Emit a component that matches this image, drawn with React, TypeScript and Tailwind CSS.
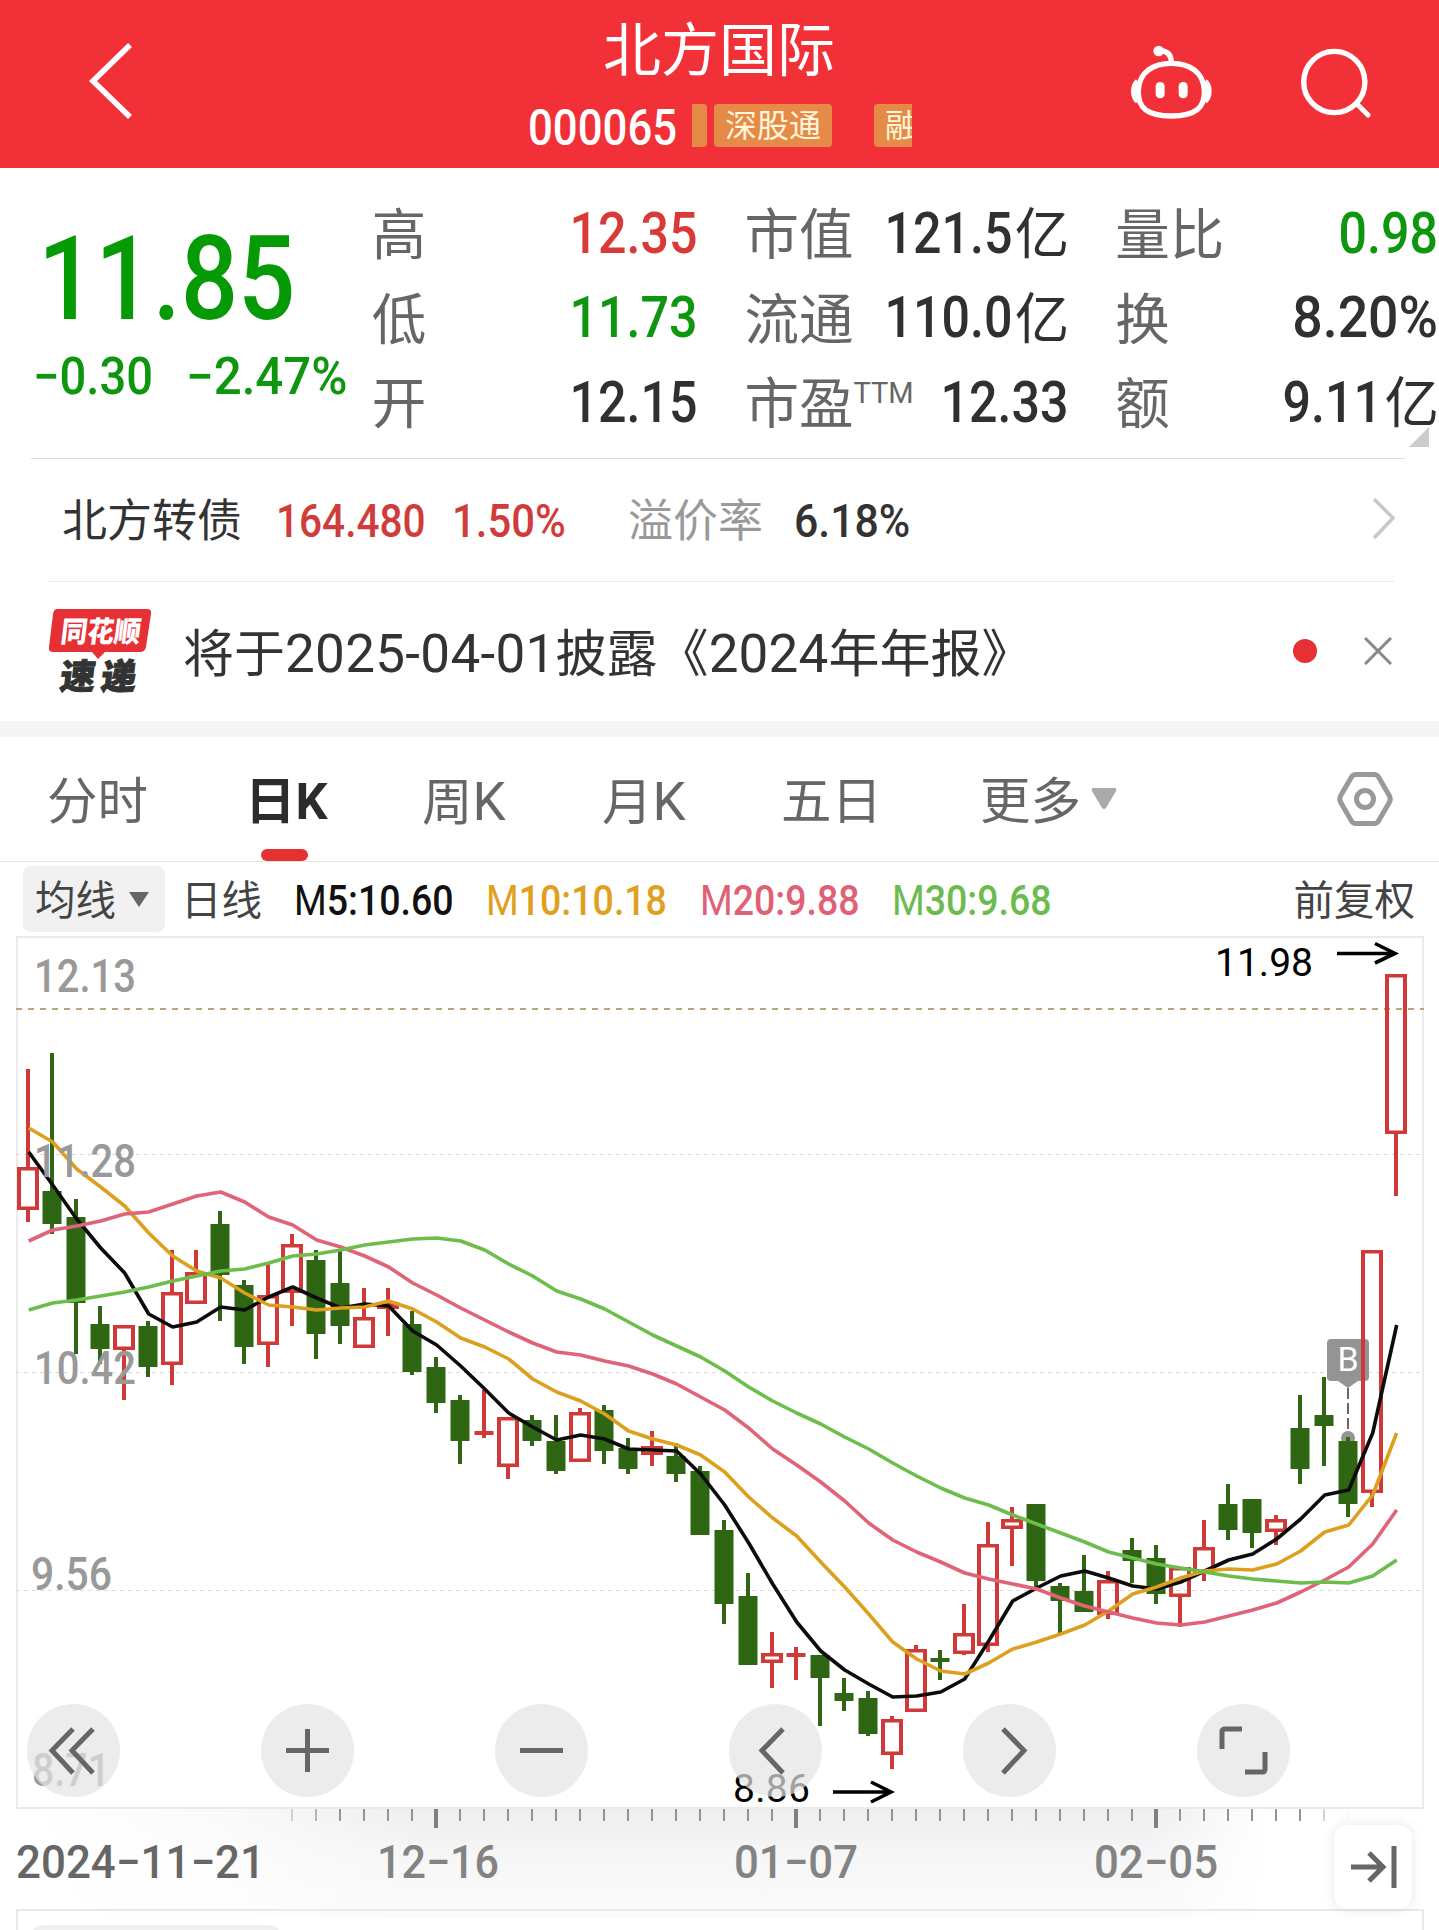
import type { ReactNode } from 'react'
import { clsx } from 'clsx'

type Candle = [up: boolean, high: number, top: number, bottom: number, low: number]

interface Stat {
  label: string
  sup?: string
  value: string
  unit?: string
  color?: string
  scale?: string
}

const UP = '#cf3a38'
const DOWN = '#2f6614'

// 每根K线的间距与起点
const STEP = 24
const START = 28

const STATS: Stat[][] = [
  [
    { label: '高', value: '12.35', color: 'text-[#d93a38]' },
    { label: '低', value: '11.73', color: 'text-[#0f960f]' },
    { label: '开', value: '12.15' },
  ],
  [
    { label: '市值', value: '121.5', unit: '亿' },
    { label: '流通', value: '110.0', unit: '亿' },
    { label: '市盈', sup: 'TTM', value: '12.33' },
  ],
  [
    { label: '量比', value: '0.98', color: 'text-[#0f960f]' },
    { label: '换', value: '8.20%', scale: 'scale-x-[0.94]' },
    { label: '额', value: '9.11', unit: '亿' },
  ],
]

const CANDLES: Candle[] = [
  [true, 1069, 1167, 1210, 1222],
  [false, 1053, 1191, 1224, 1234],
  [false, 1199, 1217, 1303, 1354],
  [false, 1306, 1324, 1349, 1364],
  [true, 1325, 1325, 1350, 1400],
  [false, 1321, 1326, 1367, 1377],
  [true, 1250, 1292, 1365, 1385],
  [true, 1250, 1272, 1304, 1304],
  [false, 1211, 1224, 1275, 1321],
  [false, 1280, 1285, 1347, 1364],
  [true, 1264, 1295, 1345, 1367],
  [true, 1234, 1244, 1293, 1326],
  [false, 1250, 1260, 1334, 1359],
  [false, 1250, 1283, 1326, 1344],
  [true, 1288, 1317, 1348, 1348],
  [true, 1288, 1302, 1309, 1336],
  [false, 1311, 1324, 1372, 1375],
  [false, 1357, 1367, 1403, 1413],
  [false, 1395, 1400, 1441, 1464],
  [true, 1390, 1431, 1435, 1438],
  [true, 1417, 1417, 1467, 1479],
  [false, 1415, 1420, 1441, 1446],
  [false, 1415, 1441, 1471, 1474],
  [true, 1408, 1412, 1462, 1462],
  [false, 1405, 1410, 1451, 1464],
  [false, 1438, 1448, 1469, 1474],
  [true, 1431, 1446, 1455, 1466],
  [false, 1443, 1456, 1474, 1482],
  [false, 1466, 1471, 1535, 1535],
  [false, 1520, 1530, 1604, 1624],
  [false, 1573, 1596, 1665, 1665],
  [true, 1632, 1653, 1663, 1688],
  [true, 1647, 1653, 1657, 1680],
  [false, 1655, 1655, 1678, 1726],
  [false, 1678, 1693, 1701, 1711],
  [false, 1691, 1698, 1734, 1736],
  [true, 1716, 1719, 1755, 1769],
  [true, 1645, 1649, 1712, 1712],
  [false, 1650, 1658, 1662, 1680],
  [true, 1604, 1633, 1654, 1655],
  [true, 1522, 1544, 1646, 1652],
  [true, 1507, 1519, 1529, 1566],
  [false, 1504, 1504, 1581, 1587],
  [false, 1583, 1586, 1601, 1633],
  [false, 1555, 1591, 1612, 1612],
  [true, 1571, 1580, 1615, 1619],
  [false, 1538, 1550, 1561, 1583],
  [false, 1545, 1558, 1594, 1604],
  [true, 1567, 1567, 1597, 1627],
  [true, 1520, 1547, 1573, 1581],
  [false, 1484, 1504, 1530, 1540],
  [false, 1499, 1499, 1533, 1548],
  [true, 1515, 1519, 1532, 1545],
  [false, 1395, 1428, 1469, 1484],
  [false, 1377, 1415, 1426, 1466],
  [false, 1437, 1441, 1504, 1517],
  [true, 1250, 1250, 1493, 1507],
  [true, 974, 974, 1134, 1196],
]

const MA5 = [
  1152, 1185, 1219, 1248, 1273, 1314, 1327, 1322, 1307, 1310, 1297, 1287, 1298, 1308, 1304, 1306, 1331, 1345, 1366, 1389,
  1413, 1427, 1440, 1435, 1439, 1449, 1450, 1451, 1474, 1505, 1543, 1584, 1622, 1651, 1670, 1684, 1697, 1696, 1692, 1679,
  1641, 1601, 1588, 1576, 1571, 1578, 1586, 1589, 1582, 1571, 1560, 1554, 1539, 1519, 1495, 1490, 1433, 1325,
]
const MA10 = [
  1128, 1142, 1169, 1187, 1206, 1233, 1256, 1271, 1278, 1293, 1305, 1307, 1310, 1308, 1307, 1301, 1309, 1322, 1338, 1347,
  1359, 1379, 1392, 1401, 1414, 1431, 1439, 1445, 1455, 1472, 1497, 1518, 1536, 1562, 1587, 1614, 1642, 1659, 1671, 1674,
  1663, 1649, 1642, 1634, 1625, 1611, 1594, 1587, 1578, 1571, 1569, 1570, 1564, 1551, 1532, 1525, 1495, 1433,
]
const MA20 = [
  1241, 1230, 1226, 1221, 1214, 1212, 1204, 1196, 1192, 1202, 1217, 1225, 1240, 1247, 1256, 1267, 1283, 1295, 1308, 1320,
  1332, 1343, 1352, 1355, 1361, 1366, 1374, 1384, 1397, 1410, 1428, 1449, 1465, 1482, 1501, 1523, 1540, 1552, 1562, 1573,
  1579, 1584, 1589, 1598, 1606, 1612, 1618, 1623, 1625, 1622, 1616, 1610, 1603, 1592, 1580, 1567, 1544, 1510,
]
const MA30 = [
  1310, 1303, 1300, 1296, 1292, 1287, 1281, 1276, 1271, 1269, 1263, 1256, 1254, 1250, 1245, 1242, 1239, 1238, 1241, 1250,
  1264, 1276, 1291, 1299, 1309, 1322, 1335, 1346, 1357, 1371, 1387, 1401, 1413, 1424, 1437, 1449, 1463, 1476, 1488, 1498,
  1505, 1515, 1524, 1533, 1542, 1552, 1558, 1564, 1568, 1572, 1576, 1579, 1581, 1583, 1582, 1583, 1576, 1560,
]

const LINES = [
  { data: MA5, color: '#0c0c0c' },
  { data: MA10, color: '#dda01e' },
  { data: MA20, color: '#e06377' },
  { data: MA30, color: '#6cbd4c' },
]

// 左侧价格刻度
const PRICES = [
  { text: '12.13', x: 36, y: 992, width: 98 },
  { text: '11.28', x: 36, y: 1177, width: 98 },
  { text: '10.42', x: 36, y: 1384, width: 98 },
  { text: '9.56', x: 33, y: 1590, width: 77 },
  { text: '8.71', x: 34, y: 1786, width: 74 },
]

const MAJOR_TICKS = [17, 32, 47]

function Num({ children, className }: { children: ReactNode; className?: string }) {
  return <span className={clsx('inline-block font-medium whitespace-nowrap', className)}>{children}</span>
}

function Header() {
  return (
    <header className="flex h-[168px] bg-[#f23038] text-white">
      <div className="flex w-[520px] pt-[40px] pl-[86px]">
        <svg width="50" height="82" viewBox="0 0 50 82" fill="none" stroke="#fff" strokeWidth="5.6">
          <path d="M44 5 L7 41 L44 77" />
        </svg>
      </div>
      <div className="flex w-[400px] flex-col">
        <h1 className="mt-[21px] ml-[83px] text-[58px] leading-[60px] font-normal">北方国际</h1>
        <div className="mt-[23px] flex h-[43px] items-center">
          <Num className="w-[172px] origin-left translate-x-[8px] translate-y-[2px] scale-x-[0.875] text-[50px] leading-none">
            000065
          </Num>
          <div className="flex h-full w-[220px] items-center overflow-hidden bg-[#f23038] text-[32px] leading-[45px] text-[#fff6dc]">
            <span className="h-full w-[15px] shrink-0 rounded-r-[4px] bg-[#e68b47]" />
            <span className="ml-[7px] h-full w-[118px] shrink-0 rounded-[4px] bg-[#e68b47] text-center">深股通</span>
            <span className="ml-[42px] h-full w-[80px] shrink-0 rounded-[4px] bg-[#e68b47] pl-[11px]">融</span>
          </div>
        </div>
      </div>
      <div className="ml-auto flex pt-[40px]">
        <svg className="mr-[79px]" width="88" height="82" viewBox="0 0 264 246" fill="none" stroke="#fff">
          <ellipse cx="83" cy="33" rx="16" ry="16" fill="#fff" stroke="none" />
          <path d="M88 31 C108 33 121 43 121 67" strokeWidth="16" />
          <path
            d="M121 70 C68 70 24 95 22 152 C20 205 50 228 121 228 C192 228 222 205 220 152 C218 95 174 70 121 70 Z"
            strokeWidth="16"
          />
          <path d="M20 124 C10 132 8 141 8 153 C8 166 10 175 20 184" strokeWidth="16" />
          <path d="M222 124 C232 132 234 141 234 153 C234 166 232 175 222 184" strokeWidth="16" />
          <rect x="74" y="126" width="27" height="49" rx="13" fill="#fff" stroke="none" />
          <rect x="143" y="126" width="27" height="49" rx="13" fill="#fff" stroke="none" />
        </svg>
        <svg className="mr-[67px]" width="74" height="84" viewBox="0 0 74 84" fill="none" stroke="#fff" strokeWidth="5.4">
          <circle cx="36.3" cy="42" r="30.6" />
          <path d="M59 64 L70 75" strokeLinecap="round" strokeWidth="5" />
        </svg>
      </div>
    </header>
  )
}

function StatRow({ label, sup, value, unit, color = 'text-[#303030]', scale = 'scale-x-[0.88]' }: Stat) {
  return (
    <div className="flex h-[84.5px] items-center justify-between text-[54.5px] leading-none">
      <span className="flex translate-y-[3px] text-[#666]">
        {label}
        {sup && <sup className="top-0 mt-[2px] text-[29px] leading-none font-normal">{sup}</sup>}
      </span>
      <span className={clsx('flex items-center', color)}>
        <Num className={clsx('origin-right translate-y-[1px] text-[57px]', unit ? '-translate-x-[3px]' : '-translate-x-px', scale)}>
          {value}
        </Num>
        {unit && <span className="-ml-px translate-y-[2px]">{unit}</span>}
      </span>
    </div>
  )
}

function Quote() {
  return (
    <section className="relative flex h-[291px]">
      <div className="flex w-[372px] flex-col text-[#0f960f]">
        <Num className="mt-[53px] ml-[38px] origin-left scale-x-[0.87] text-[116px] leading-none text-[#069a06]">11.85</Num>
        <div className="mt-[14px] flex text-[51px] leading-none">
          <Num className="ml-[33px] w-[153px] origin-left scale-x-[0.925]">−0.30</Num>
          <Num className="origin-left scale-x-[0.965]">−2.47%</Num>
        </div>
      </div>
      {STATS.map((rows, i) => (
        <div
          key={i}
          className={clsx('pt-[22px]', i === 2 ? 'ml-[46px] w-[324px]' : i === 1 ? 'ml-[46px] w-[325px]' : 'w-[327px]')}
        >
          {rows.map((row) => (
            <StatRow key={row.label} {...row} />
          ))}
        </div>
      ))}
      <svg className="absolute right-[10px] bottom-[12px]" width="20" height="20" viewBox="0 0 20 20">
        <path d="M20 0 V20 H0 Z" fill="#ccc" />
      </svg>
      <div className="absolute bottom-0 left-[31px] h-px w-[1374px] bg-[#dcdcdc]" />
    </section>
  )
}

function BondBar() {
  return (
    <section className="mr-[45px] ml-[47px] flex h-[123px] items-center border-b border-[#ebebeb] text-[45px] leading-none text-[#333]">
      <span className="w-[229px] translate-y-px pl-[15px]">北方转债</span>
      <Num className="w-[176px] origin-left scale-x-[0.863] text-[47px] text-[#d03c3b]">164.480</Num>
      <Num className="w-[176px] origin-left scale-x-[0.89] text-[47px] text-[#d03c3b]">1.50%</Num>
      <span className="w-[166px] translate-y-px text-[#999]">溢价率</span>
      <Num className="origin-left scale-x-[0.91] text-[47px]">6.18%</Num>
      <svg className="-mr-[2px] ml-auto" width="24" height="44" viewBox="0 0 24 44" fill="none" stroke="#c8c8c8" strokeWidth="3.5">
        <path d="M2 1 L21 20 L2 40" />
      </svg>
    </section>
  )
}

function NoticeBar() {
  return (
    <section className="flex h-[139px] items-center text-[51px] leading-none text-[#333]">
      <svg className="ml-[45px] overflow-visible" width="108" height="90" viewBox="0 0 108 90">
        <path d="M12 2 H102 Q107 2 106 7 L101 40 Q100 45 95 45 H60 L53 52 L47 45 H8 Q3 45 4 40 L8 7 Q9 2 12 2 Z" fill="#e63033" />
        <g transform="skewX(-7)" fontFamily="Noto Sans CJK SC" fontWeight="900">
          <text x="19" y="35" fontSize="29" fill="#fff" textLength="80" lengthAdjust="spacingAndGlyphs">
            同花顺
          </text>
          <text x="24" y="82" fontSize="35" fill="#333" stroke="#333" strokeWidth="1" textLength="76">
            速递
          </text>
        </g>
      </svg>
      <p className="ml-[30px] translate-y-[3px] whitespace-nowrap">
        将于<span className="text-[53px] tracking-[0.3px]">2025-04-01</span>披露《
        <span className="text-[53px] tracking-[0.2px]">2024</span>年年报》
      </p>
      <span className="ml-auto size-[24px] -translate-y-px rounded-full bg-[#e63033]" />
      <svg className="mr-[47px] ml-[47px] -translate-y-px" width="28" height="28" viewBox="0 0 28 28" stroke="#888" strokeWidth="3">
        <path d="M1 1 L27 27 M27 1 L1 27" />
      </svg>
    </section>
  )
}

function Tabs() {
  return (
    <nav className="flex h-[125px] items-center border-b border-[#e4e4e4] text-[50.5px] leading-none text-[#666]">
      <span className="w-[201px] translate-y-[3px] pl-[47px]">分时</span>
      <span className="relative flex h-full w-[221px] items-center pl-[44px] font-bold text-[#2c2c2c]">
        <span className="translate-y-[3px]">日K</span>
        <i className="absolute bottom-0 left-[60px] h-[12px] w-[47px] rounded-full bg-[#e63130]" />
      </span>
      <span className="w-[180px] translate-y-[3px]">
        周<span className="text-[53px]">K</span>
      </span>
      <span className="w-[179px] translate-y-[3px]">
        月<span className="text-[53px]">K</span>
      </span>
      <span className="w-[199px] translate-y-[3px]">五日</span>
      <span className="translate-y-[3px]">更多</span>
      <svg className="ml-[10px]" width="26" height="22" viewBox="0 0 26 22">
        <path d="M2 0 H24 Q26 0 25 3 L15 20 Q13 22 11 20 L1 3 Q0 0 2 0 Z" fill="#aaa" />
      </svg>
      <svg className="mr-[45px] ml-auto" width="58" height="56" viewBox="0 0 58 56" fill="none" stroke="#999" strokeWidth="5">
        <path d="M20 3.5 H38 Q41 3.5 42.5 6 L53.5 25 Q55 28 53.5 31 L42.5 50 Q41 52.5 38 52.5 H20 Q17 52.5 15.5 50 L4.5 31 Q3 28 4.5 25 L15.5 6 Q17 3.5 20 3.5 Z" />
        <circle cx="29" cy="28" r="8.5" />
      </svg>
    </nav>
  )
}

function MaItem({ name, value, className }: { name: string; value: string; className?: string }) {
  return (
    <Num className={clsx('origin-left translate-y-px scale-x-[0.872] text-[43px]', className)}>
      <span className="font-normal">{name[0]}</span>
      {name.slice(1)}:{value}
    </Num>
  )
}

function MaBar() {
  return (
    <div className="flex h-[74px] items-center text-[40.5px] leading-none text-[#444]">
      <button className="ml-[23px] flex h-[66px] w-[142px] items-center justify-between rounded-[8px] bg-[#f1f1f1] pr-[15px] pl-[12px]">
        <span className="translate-y-[2px]">均线</span>
        <svg width="22" height="15" viewBox="0 0 22 15">
          <path d="M1 0 H21 L11 15 Z" fill="#666" />
        </svg>
      </button>
      <span className="ml-[16px] w-[112px] translate-y-[2px]">日线</span>
      <MaItem name="M5" value="10.60" className="w-[192px] translate-x-px text-[#111]" />
      <MaItem name="M10" value="10.18" className="w-[215px] translate-x-px text-[#dfa01e]" />
      <MaItem name="M20" value="9.88" className="w-[192px] text-[#e06075]" />
      <MaItem name="M30" value="9.68" className="text-[#6cbb4e]" />
      <span className="mr-[24px] ml-auto translate-y-[2px]">前复权</span>
    </div>
  )
}

function CandleBar({ candle, index }: { candle: Candle; index: number }) {
  const [up, high, top, bottom, low] = candle
  const x = START + index * STEP
  if (!up) {
    return (
      <g fill={DOWN}>
        <rect x={x - 2} y={high} width="4" height={low - high} />
        <rect x={x - 9.5} y={top} width="19" height={bottom - top} />
      </g>
    )
  }
  // 十字星没有空心实体
  const doji = bottom - top <= 5
  return (
    <g fill={UP}>
      <rect x={x - 2} y={high} width="4" height={top - high} />
      <rect x={x - 2} y={bottom} width="4" height={low - bottom} />
      {doji ? (
        <rect x={x - 9.5} y={top} width="19" height={bottom - top} />
      ) : (
        <path
          fillRule="evenodd"
          d={`M${x - 11} ${top}H${x + 11}V${bottom}H${x - 11}Z M${x - 7} ${top + 3.5}V${bottom - 3.5}H${x + 7}V${top + 3.5}Z`}
        />
      )}
    </g>
  )
}

function Chart() {
  return (
    <svg width="1439" height="873" viewBox="0 936 1439 873" className="block" fontFamily="Roboto">
      <rect x="17" y="937" width="1406" height="871" fill="none" stroke="#ebebeb" strokeWidth="2" />
      {[1154.5, 1372.5, 1590.5].map((y) => (
        <path key={y} d={`M16 ${y} H1421`} stroke="#dcdcdc" strokeDasharray="4 4" />
      ))}
      <path d="M16 1009 H1424" stroke="#bca478" strokeWidth="2" strokeDasharray="6 6" />

      {/* 买入标记 */}
      <g>
        <rect x="1327" y="1339" width="42" height="42" rx="4" fill="#949494" />
        <path d="M1338 1381 H1358 L1348 1388 Z" fill="#949494" />
        <path d="M1348 1388 V1434" stroke="#666" strokeWidth="2" strokeDasharray="11 4" />
        <circle cx="1348" cy="1438" r="7" fill="#949494" />
        <text x="1348" y="1371" fontSize="34" fill="#fff" textAnchor="middle">
          B
        </text>
      </g>

      {CANDLES.map((candle, i) => (
        <CandleBar key={i} candle={candle} index={i} />
      ))}
      {LINES.map(({ data, color }) => (
        <polyline
          key={color}
          points={data.map((y, i) => `${START + 0.7 + i * STEP},${y}`).join(' ')}
          fill="none"
          stroke={color}
          strokeWidth="3.6"
          strokeLinejoin="round"
        />
      ))}

      {PRICES.map(({ text, x, y, width }) => (
        <text key={text} x={x - 2} y={y} fontSize="46" fontWeight="500" fill="#999" textLength={width + 4} lengthAdjust="spacingAndGlyphs">
          {text}
        </text>
      ))}
      <text x="1215" y="976" fontSize="39" textLength="98">
        11.98
      </text>
      <text x="733" y="1802" fontSize="39" textLength="77">
        8.86
      </text>
      <g fill="none" stroke="#000" strokeWidth="3.6">
        <path d="M1337 953.5 H1395 M1375 943.5 L1395 953.5 L1375 963" />
        <path d="M833 1792 H891 M871 1782 L891 1792 L871 1802" />
      </g>
    </svg>
  )
}

function ToolButton({ children }: { children: ReactNode }) {
  return (
    <button className="size-[93px] rounded-full bg-[#e4e4e4]/70">
      <svg width="93" height="93" viewBox="0 0 93 93" fill="none" stroke="#666" strokeWidth="5">
        {children}
      </svg>
    </button>
  )
}

function Toolbar() {
  return (
    <div className="absolute bottom-[12px] left-[27px] flex gap-[141px]">
      <ToolButton>
        <path d="M46 25 L25 46.5 L46 69 M66 25 L45 46.5 L66 69" />
      </ToolButton>
      <ToolButton>
        <path d="M46.5 25 V68 M25 46.5 H68" />
      </ToolButton>
      <ToolButton>
        <path d="M25 46.5 H68" />
      </ToolButton>
      <ToolButton>
        <path d="M54 25 L33 46.5 L54 69" />
      </ToolButton>
      <ToolButton>
        <path d="M40 25 L61 46.5 L40 69" />
      </ToolButton>
      <ToolButton>
        <path d="M25 45 V28 Q25 25 28 25 H45 M68 48 V65 Q68 68 65 68 H48" />
      </ToolButton>
    </div>
  )
}

function TimeAxis() {
  const ticks = Array.from({ length: 45 }, (_, i) => i + 11)
  // 两端刻度渐隐
  const fade = (i: number) => {
    if (i === 55) return 0.06
    if (i === 11 || i === 54) return 0.4
    if (i === 12) return 0.65
    return 1
  }
  return (
    <div className="relative h-[100px]">
      <svg width="1439" height="117" viewBox="0 1809 1439 117" className="block" fontFamily="Roboto" fontWeight="500">
        <defs>
          <linearGradient id="shade" x1="0" y1="0" x2="0" y2="1">
            <stop offset="0" stopColor="#eeeeee" />
            <stop offset="0.4" stopColor="#f6f6f6" />
            <stop offset="1" stopColor="#fbfbfb" />
          </linearGradient>
          <linearGradient id="edge" x1="0" y1="0" x2="1" y2="0">
            <stop offset="0" stopColor="#fff" stopOpacity="1" />
            <stop offset="0.15" stopColor="#fff" stopOpacity="0.7" />
            <stop offset="0.3" stopColor="#fff" stopOpacity="0" />
            <stop offset="0.86" stopColor="#fff" stopOpacity="0" />
            <stop offset="0.95" stopColor="#fff" stopOpacity="1" />
            <stop offset="1" stopColor="#fff" stopOpacity="1" />
          </linearGradient>
        </defs>
        <rect x="30" y="1809" width="1300" height="109" fill="url(#shade)" />
        <rect x="29" y="1809" width="1302" height="110" fill="url(#edge)" />
        {ticks.map((i) => {
          const major = MAJOR_TICKS.includes(i)
          const w = major ? 4 : 2
          return (
            <rect
              key={i}
              x={START + i * STEP - w / 2}
              y="1809"
              width={w}
              height={major ? 19 : 12}
              fill={major ? '#7f7f7f' : '#949494'}
              opacity={fade(i)}
            />
          )
        })}
        <g fontSize="46" fill="#838383">
          <text x="16" y="1878" fill="#666" textLength="249" lengthAdjust="spacingAndGlyphs">
            2024−11−21
          </text>
          <text x="377" y="1878" textLength="122" lengthAdjust="spacingAndGlyphs">
            12−16
          </text>
          <text x="734" y="1878" textLength="124" lengthAdjust="spacingAndGlyphs">
            01−07
          </text>
          <text x="1094" y="1878" textLength="124" lengthAdjust="spacingAndGlyphs">
            02−05
          </text>
        </g>
      </svg>
      <button className="absolute top-[16px] right-[27px] z-10 h-[84px] w-[78px] rounded-[13px] bg-white shadow-[0_0_12px_rgba(0,0,0,0.1)]">
        <svg width="78" height="84" viewBox="0 0 78 84" fill="none" stroke="#666" strokeWidth="5">
          <path d="M17 42 H48 M35 28 L49 42 L35 56 M60 21 V63" />
        </svg>
      </button>
    </div>
  )
}

export default function App() {
  return (
    <main className="h-[1930px] w-[1439px] overflow-hidden bg-white font-[Roboto,'Noto_Sans_CJK_SC',sans-serif]">
      <Header />
      <Quote />
      <BondBar />
      <NoticeBar />
      <div className="h-[16px] bg-[#f4f4f4]" />
      <Tabs />
      <MaBar />
      <div className="relative">
        <Chart />
        <Toolbar />
      </div>
      <TimeAxis />
      <div className="relative ml-[16px] h-[21px] w-[1408px] border-2 border-b-0 border-[#e9e9e9] pt-[14px] pl-[14px]">
        <div className="h-[20px] w-[248px] rounded-t-[10px] bg-[#f0f0f0]" />
      </div>
    </main>
  )
}
